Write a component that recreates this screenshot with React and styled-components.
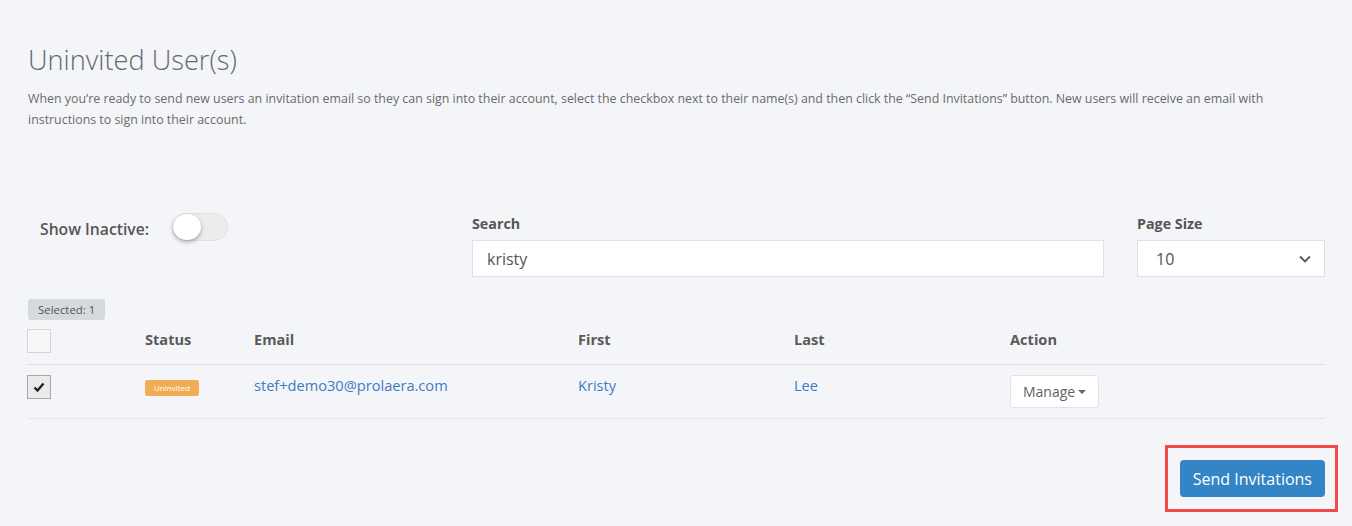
import React from "react";
import styled, { createGlobalStyle } from "styled-components";

const GlobalStyle = createGlobalStyle`
  html, body {
    margin: 0;
    padding: 0;
    background: #f4f5f9;
    font-family: "Open Sans", "Noto Sans", sans-serif;
    color: #555;
  }
  * { box-sizing: border-box; }
`;

const Page = styled.div`
  padding: 42px 27px 0 28px;
  min-height: 526px;
`;

const Title = styled.h1`
  margin: 0;
  font-size: 27.2px;
  line-height: 36px;
  font-weight: 300;
  color: #636873;
`;

const Intro = styled.p`
  margin: 10px 0 0;
  font-size: 12.4px;
  line-height: 21px;
  color: #6a6a6a;
  max-width: 1260px;
`;

const Controls = styled.div`
  display: grid;
  grid-template-columns: 411px 632px 188px;
  column-gap: 33px;
  margin-top: 84px;
`;

const ToggleField = styled.div`
  display: flex;
  align-items: center;
  gap: 23px;
  padding-left: 12px;
  height: 28px;
  margin-top: -1px;
`;

const ToggleLabel = styled.span`
  font-size: 15.7px;
  font-weight: 600;
  color: #555;
  padding-top: 3px;
`;

const Switch = styled.span`
  position: relative;
  display: inline-block;
  width: 56px;
  height: 28px;
  border-radius: 14px;
  background: #ececec;
  border: 1px solid #e0e0e0;

  &::after {
    content: "";
    position: absolute;
    top: 0;
    left: 0;
    width: 28px;
    height: 26px;
    border-radius: 50%;
    background: #fff;
    box-shadow: 0 2px 4px rgba(0, 0, 0, 0.3);
  }
`;

const Field = styled.div`
  display: flex;
  flex-direction: column;
`;

const FieldLabel = styled.label`
  font-size: 14.3px;
  line-height: 20px;
  font-weight: 700;
  color: #555;
  margin-bottom: 6px;
`;

const Input = styled.div`
  height: 37px;
  background: #fff;
  border: 1px solid #dfe1e5;
  padding: 0 ${(p) => (p.$select ? "12px 0 18px" : "14px")};
  display: flex;
  align-items: center;
  justify-content: space-between;
  font-size: 16px;
  color: #555;
`;

const Selected = styled.div`
  display: inline-block;
  margin-top: 22px;
  height: 21px;
  padding: 0 10px;
  background: #d5dadd;
  border-radius: 3px;
  font-size: 11.4px;
  line-height: 21px;
  color: #555;
`;

const Row = styled.div`
  display: grid;
  grid-template-columns: 117px 109px 324px 216px 216px 1fr;
  align-items: start;
  padding: ${(p) => (p.$head ? "9px 0 11px" : "10px 0 10px")};
  border-bottom: 1px solid ${(p) => (p.$head ? "#dcdde1" : "#e4e5e8")};
`;

const Check = styled.span`
  display: flex;
  align-items: center;
  justify-content: center;
  width: 24px;
  height: 24px;
  margin-left: -1px;
  border: 1px solid ${(p) => (p.$checked ? "#a9a9a9" : "#d8d6d2")};
  background: ${(p) => (p.$checked ? "#ebebeb" : "#f7f7f7")};
`;

const Head = styled.span`
  font-size: 14.6px;
  line-height: 20px;
  font-weight: 700;
  color: #5a5a5a;
`;

const Cell = styled.span`
  font-size: 14.6px;
  line-height: 20px;
  color: #3b7cc4;
`;

const Badge = styled.span`
  justify-self: start;
  margin-top: 5px;
  height: 16px;
  padding: 0 9px;
  background: #f0ad55;
  border-radius: 2px;
  font-size: 8px;
  line-height: 16px;
  color: #fff;
`;

const Manage = styled.span`
  justify-self: start;
  display: inline-flex;
  align-items: center;
  gap: 3px;
  height: 33px;
  padding: 0 12px;
  background: #fff;
  border: 1px solid #e2e3e6;
  border-radius: 3px;
  font-size: 14px;
  color: #5f5f5f;

  &::after {
    content: "";
    border-left: 4px solid transparent;
    border-right: 4px solid transparent;
    border-top: 4px solid #666;
  }
`;

const Footer = styled.div`
  display: flex;
  justify-content: flex-end;
  margin-top: 26px;
  margin-right: -13px;
`;

const Highlight = styled.div`
  border: 3px solid #f24848;
  padding: 12px 10px 12px 12px;
`;

const PrimaryButton = styled.button`
  height: 37px;
  padding: 0 13px;
  background: #3385c6;
  border: none;
  border-radius: 4px;
  font-family: inherit;
  font-size: 16px;
  color: #fff;
`;

const Chevron = () => (
  <svg width="14" height="14" viewBox="0 0 14 14">
    <polyline points="2,4.5 7,9.5 12,4.5" fill="none" stroke="#555" strokeWidth="1.8" />
  </svg>
);

const Tick = () => (
  <svg width="12" height="12" viewBox="0 0 12 12">
    <path d="M1.5 6.5 L4.5 9.5 L10.5 2.5" fill="none" stroke="#222" strokeWidth="2.4" />
  </svg>
);

export default function App() {
  return (
    <>
      <GlobalStyle />
      <Page>
        <Title>Uninvited User(s)</Title>
        <Intro>
          When you’re ready to send new users an invitation email so they can sign into their
          account, select the checkbox next to their name(s) and then click the “Send Invitations”
          button. New users will receive an email with instructions to sign into their account.
        </Intro>

        <Controls>
          <ToggleField>
            <ToggleLabel>Show Inactive:</ToggleLabel>
            <Switch />
          </ToggleField>
          <Field>
            <FieldLabel>Search</FieldLabel>
            <Input>kristy</Input>
          </Field>
          <Field>
            <FieldLabel>Page Size</FieldLabel>
            <Input $select>
              10
              <Chevron />
            </Input>
          </Field>
        </Controls>

        <Selected>Selected: 1</Selected>

        <Row $head>
          <Check />
          <Head>Status</Head>
          <Head>Email</Head>
          <Head>First</Head>
          <Head>Last</Head>
          <Head>Action</Head>
        </Row>
        <Row>
          <Check $checked>
            <Tick />
          </Check>
          <Badge>Uninvited</Badge>
          <Cell>stef+demo30@prolaera.com</Cell>
          <Cell>Kristy</Cell>
          <Cell>Lee</Cell>
          <Manage>Manage</Manage>
        </Row>

        <Footer>
          <Highlight>
            <PrimaryButton>Send Invitations</PrimaryButton>
          </Highlight>
        </Footer>
      </Page>
    </>
  );
}
